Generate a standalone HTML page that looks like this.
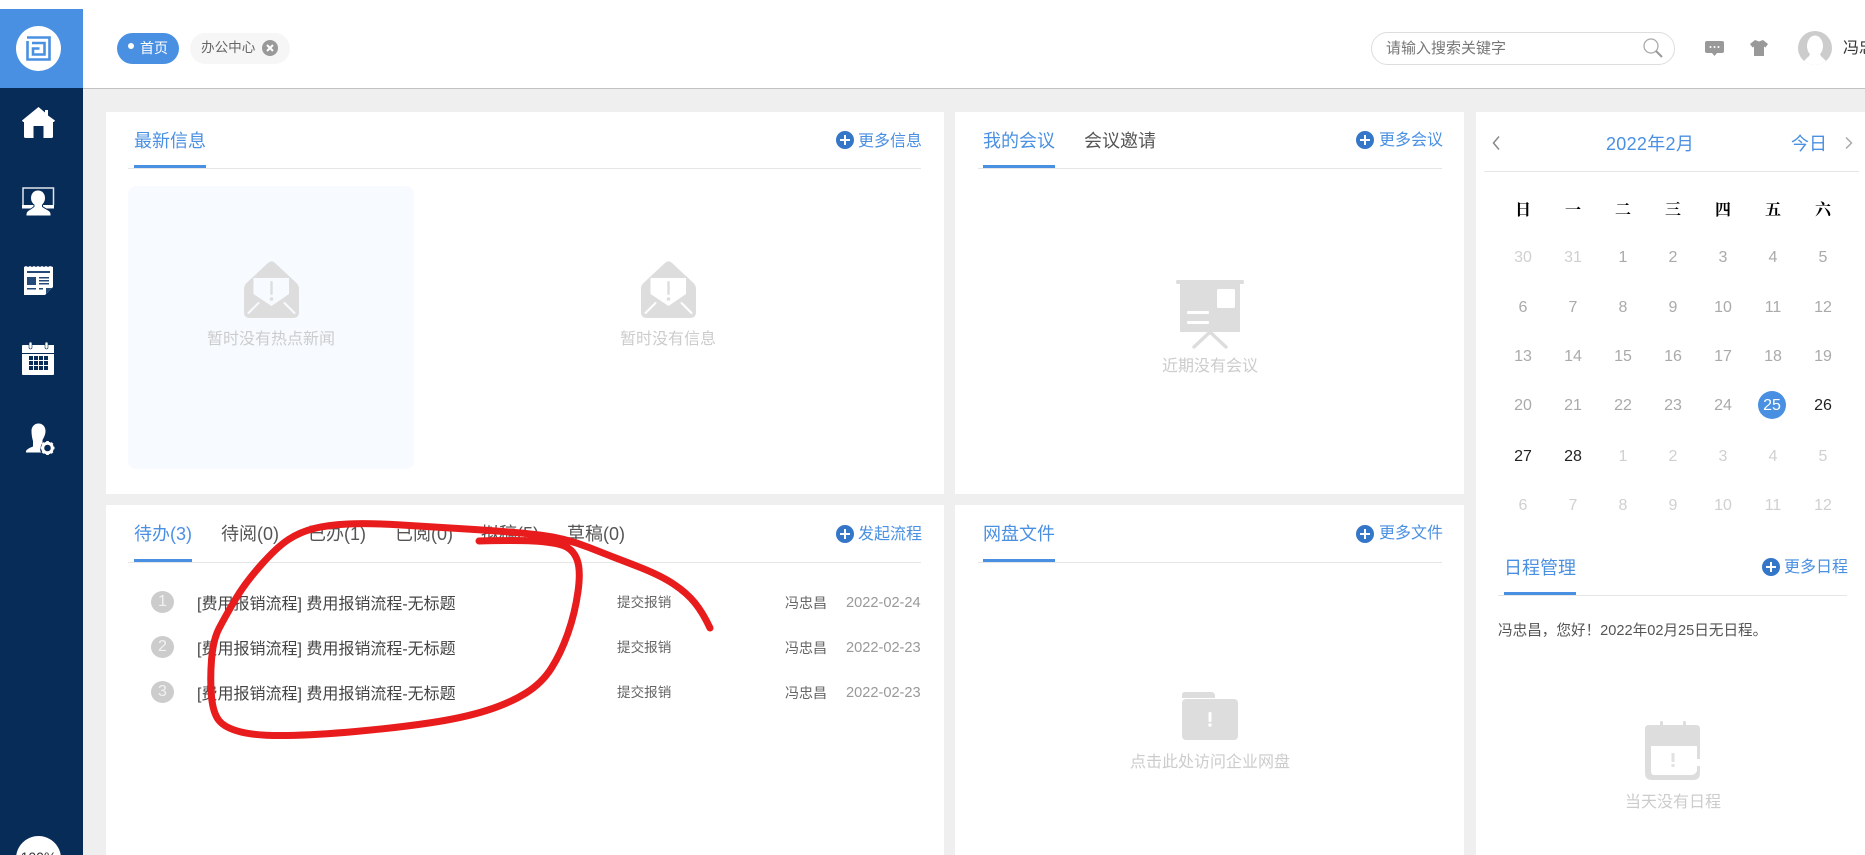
<!DOCTYPE html>
<html lang="zh-CN"><head><meta charset="utf-8"><title>办公中心</title>
<style>
html,body{margin:0;padding:0;width:1865px;height:855px;overflow:hidden;background:#efefef;font-family:"Liberation Sans","Noto Sans CJK SC",sans-serif}
body{position:relative}
#root{position:absolute;left:0;top:0;width:1865px;height:855px;overflow:hidden}
.a{position:absolute}
.t{position:absolute;white-space:nowrap;line-height:24px;height:24px}
.b{color:#4a90e2}
.e{color:#ccc;font-size:16px;text-align:center}
.h{font-size:18px}
.m{font-size:16px;color:#4a90e2}
.g{color:#555;font-size:18px}
.r{font-size:16px;color:#444}
.s{font-size:13.6px;color:#666}
.o{font-size:14px;color:#666}
.d{font-size:14.6px;color:#999}
.c{font-size:16px;text-align:center;width:50px}
.w{font-family:"Liberation Serif","Noto Serif CJK SC",serif;font-weight:700;color:#000}
.k{color:#aaa}.l{color:#d0d0d0}.n{color:#222}
.p{position:absolute;background:#fff}
.u{position:absolute;background:#4a90e2;height:3px}
.x{position:absolute;background:#e6e6e6;height:1px}
.q{position:absolute;left:151px;width:23px;height:22px;border-radius:50%;background:#ccc;color:#f2f2f2;font-size:16px;line-height:22px;text-align:center}
svg{position:absolute;overflow:visible}
</style></head><body><div id="root">

<div class="a" style="left:0;top:0;width:1865px;height:88px;background:#fff"></div>
<div class="a" style="left:83px;top:88px;width:1782px;height:1px;background:#c2c2c2"></div>
<div class="a" style="left:0;top:88px;width:83px;height:767px;background:#082c58"></div>
<div class="a" style="left:0;top:9px;width:83px;height:79px;background:#4a90e2"></div>

<!-- sidebar icons -->
<svg style="left:0;top:0" width="83" height="855" viewBox="0 0 83 855">
<circle cx="38.5" cy="48.5" r="22.5" fill="#fff"/>
<g fill="none" stroke="#4a90e2" stroke-width="2.6">
<path d="M27.5 41V59.5H49.5V37.5H27"/><path d="M32 43H44.5V54.5H33V48.5H39.5"/>
</g>
<path fill="#fff" d="M38.5 107L45 112.500V110H48V115.500L55 120.500L54 122H53V136.500Q53 138 51.500 138H43.500V126H33.500V138H25.500Q24 138 24 136.500V122H23L22 120.500Z"/>
<path fill="none" stroke="#dfe5ec" stroke-width="1.5" d="M23 205V188H53.500V205"/>
<path fill="#fff" d="M22 205H54V208.500H22Z"/>
<path fill="#fff" stroke="#082c58" stroke-width="1" d="M38 190C43 190 45.500 194 45.500 198C45.500 201 44 203.500 42.500 205V206.500C45 209 51 210 51 214V216H26V214C26 210 32 209 34 206.500V205C32 203.500 30.500 201 30.500 198C30.500 194 33 190 38 190Z"/>
<path fill="#fff" d="M24 267L26 266L28 267L30 266L32 267L34 266L36 267L38 266L40 267L42 266L44 267L46 266L48 267L50 266L53 267V287L45 295H24Z"/>
<g fill="#234a78"><rect x="27" y="271" width="23" height="2"/><rect x="27" y="277" width="9" height="8"/><rect x="39" y="277" width="10" height="1.500"/><rect x="39" y="280" width="10" height="1.500"/><rect x="39" y="283" width="10" height="1.500"/><rect x="27" y="288" width="9" height="1.500"/><rect x="39" y="288" width="4" height="1.500"/><path d="M46 294V288H52Z"/></g>
<path fill="#fff" d="M23 345H54V374Q54 375 53 375H23Q22 375 22 374V346Q22 345 23 345Z"/>
<rect x="22" y="353" width="32" height="1" fill="#082c58"/>
<rect x="29" y="342" width="3" height="7" rx="1.500" fill="#fff" stroke="#082c58" stroke-width=".6"/>
<rect x="45" y="342" width="3" height="7" rx="1.500" fill="#fff" stroke="#082c58" stroke-width=".6"/>
<g fill="#082c58"><rect x="29" y="356" width="4" height="4"/><rect x="34" y="356" width="4" height="4"/><rect x="39" y="356" width="4" height="4"/><rect x="44" y="356" width="4" height="4"/><rect x="29" y="361" width="4" height="4"/><rect x="34" y="361" width="4" height="4"/><rect x="39" y="361" width="4" height="4"/><rect x="44" y="361" width="4" height="4"/><rect x="29" y="366" width="4" height="4"/><rect x="34" y="366" width="4" height="4"/><rect x="39" y="366" width="4" height="4"/><rect x="44" y="366" width="4" height="4"/></g>
<path fill="#fff" d="M38.500 423.500C43 423.500 45.500 427 45.500 431C45.500 435 43.500 438 42.500 440V442.500C42 443 41 446 40 448C40 450 40.500 451.500 41 452.500H26C25.500 450 28 448.500 33 446.500V441C32 438 31.500 434 31.500 431C31.500 427 34 423.500 38.500 423.500Z"/>
<circle cx="47.500" cy="448" r="4.800" fill="none" stroke="#fff" stroke-width="3"/>
<g stroke="#fff" stroke-width="2.600"><path d="M47.500 441V444M47.500 452V455M40.500 448H43.500M51.500 448H54.500M42.500 443L44.700 445.200M50.300 450.800L52.500 453M52.500 443L50.300 445.200M44.700 450.800L42.500 453"/></g>
<circle cx="38.500" cy="858.500" r="22.500" fill="#fff"/>
</svg>
<div class="t" style="left:16px;width:45px;top:845px;font-size:14px;color:#333;text-align:center">100%</div>

<!-- header -->
<div class="a" style="left:117px;top:33px;width:62px;height:31px;border-radius:16px;background:#4a90e2"></div>
<div class="a" style="left:128px;top:43px;width:6px;height:6px;border-radius:50%;background:#fff"></div>
<div class="t" style="left:140px;top:36px;font-size:14px;color:#fff">首页</div>
<div class="a" style="left:190px;top:33px;width:100px;height:31px;border-radius:16px;background:#f6f6f6"></div>
<div class="t" style="left:201px;top:36px;font-size:13.6px;color:#666">办公中心</div>
<svg style="left:262px;top:40px" width="16" height="16" viewBox="0 0 16 16"><circle cx="8" cy="8" r="8" fill="#999"/><path d="M5 5L11 11M11 5L5 11" stroke="#fff" stroke-width="2"/></svg>

<div class="a" style="left:1371px;top:32px;width:302px;height:31px;border:1px solid #ddd;border-radius:17px;background:#fff"></div>
<div class="t" style="left:1386px;top:37px;font-size:15px;color:#777">请输入搜索关键字</div>
<svg style="left:1641px;top:36px" width="24" height="24" viewBox="0 0 24 24"><circle cx="10" cy="10" r="7" fill="none" stroke="#aaa" stroke-width="1.300"/><path d="M15 15L21 21" stroke="#999" stroke-width="2"/></svg>
<svg style="left:1705px;top:41px" width="19" height="15" viewBox="0 0 19 15"><path fill="#999" d="M2 0H17Q19 0 19 2V10Q19 12 17 12H12L9.500 15L7 12H2Q0 12 0 10V2Q0 0 2 0Z"/><circle cx="5.500" cy="6" r="1" fill="#fff"/><circle cx="9.500" cy="6" r="1" fill="#fff"/><circle cx="13.500" cy="6" r="1" fill="#fff"/></svg>
<svg style="left:1750px;top:40px" width="18" height="16" viewBox="0 0 18 16"><path fill="#999" d="M5 0L9 1.500L13 0L18 4L15.500 7.500L14 6.500V16H4V6.500L2.500 7.500L0 4Z"/></svg>
<svg style="left:1798px;top:31px" width="34" height="34" viewBox="0 0 34 34"><defs><clipPath id="av"><circle cx="17" cy="17" r="17"/></clipPath></defs><circle cx="17" cy="17" r="17" fill="#ccc"/><g clip-path="url(#av)" fill="#fff"><ellipse cx="17" cy="15" rx="8" ry="10.500"/><path d="M12 23C11 27 5 28 5 34H29C29 28 23 27 22 23Z"/></g></svg>
<div class="t" style="left:1843px;top:37px;font-size:16px;color:#333">冯忠昌</div>

<!-- panels -->
<div class="p" style="left:106px;top:112px;width:838px;height:382px"></div>
<div class="p" style="left:955px;top:112px;width:509px;height:382px"></div>
<div class="p" style="left:106px;top:505px;width:838px;height:350px"></div>
<div class="p" style="left:955px;top:505px;width:509px;height:350px"></div>
<div class="p" style="left:1476px;top:112px;width:389px;height:743px"></div>

<!-- 最新信息 -->
<div class="t h b" style="left:134px;top:129px">最新信息</div>
<div class="x" style="left:128px;top:168px;width:793px"></div>
<div class="u" style="left:134px;top:165px;width:72px"></div>
<svg style="left:836px;top:131px" width="18" height="18" viewBox="0 0 18 18"><circle cx="9" cy="9" r="9" fill="#3476c8"/><path d="M4 9H14M9 4V14" stroke="#fff" stroke-width="2"/></svg>
<div class="t m" style="left:858px;top:130px">更多信息</div>
<div class="a" style="left:128px;top:186px;width:286px;height:283px;border-radius:8px;background:#f7faff"></div>

<svg style="left:244px;top:261px" width="55" height="57" viewBox="0 0 55 57"><path fill="#ddd" d="M24.500 1.500Q27.500 -1 30.500 1.500L52.500 22Q55 24.500 55 28V51Q55 57 49 57H6Q0 57 0 51V28Q0 24.500 2.500 22Z"/><path fill="#f7faff" d="M9.500 17H45V33L27.500 45L9.500 33Z"/><rect x="26.300" y="20" width="2.400" height="14" rx="1.200" fill="#ddd"/><circle cx="27.500" cy="38" r="1.800" fill="#ddd"/><path d="M4.500 52L14.500 42M50.500 52L40.500 42" stroke="#f7faff" stroke-width="2" stroke-linecap="round"/></svg>
<div class="t e" style="left:171px;width:200px;top:328px">暂时没有热点新闻</div>
<svg style="left:641px;top:261px" width="55" height="57" viewBox="0 0 55 57"><path fill="#ddd" d="M24.500 1.500Q27.500 -1 30.500 1.500L52.500 22Q55 24.500 55 28V51Q55 57 49 57H6Q0 57 0 51V28Q0 24.500 2.500 22Z"/><path fill="#fff" d="M9.500 17H45V33L27.500 45L9.500 33Z"/><rect x="26.300" y="20" width="2.400" height="14" rx="1.200" fill="#ddd"/><circle cx="27.500" cy="38" r="1.800" fill="#ddd"/><path d="M4.500 52L14.500 42M50.500 52L40.500 42" stroke="#fff" stroke-width="2" stroke-linecap="round"/></svg>
<div class="t e" style="left:568px;width:200px;top:328px">暂时没有信息</div>

<!-- 会议 -->
<div class="t h b" style="left:983px;top:129px">我的会议</div>
<div class="t g" style="left:1084px;top:129px">会议邀请</div>
<div class="x" style="left:978px;top:168px;width:464px"></div>
<div class="u" style="left:983px;top:165px;width:72px"></div>
<svg style="left:1356px;top:131px" width="18" height="18" viewBox="0 0 18 18"><circle cx="9" cy="9" r="9" fill="#3476c8"/><path d="M4 9H14M9 4V14" stroke="#fff" stroke-width="2"/></svg>
<div class="t m" style="left:1379px;top:129px">更多会议</div>
<svg style="left:1176px;top:280px" width="68" height="68" viewBox="0 0 68 68"><rect width="68" height="4" rx="1.500" fill="#ddd"/><rect x="4" y="3" width="60" height="49" fill="#ddd"/><rect x="41" y="9" width="18" height="19" rx="1.500" fill="#fff"/><rect x="11" y="31" width="22" height="3" rx="1" fill="#fff"/><rect x="11" y="41" width="22" height="3" rx="1" fill="#fff"/><path d="M34 52L18 67M34 52L50 67" stroke="#ddd" stroke-width="3.400" stroke-linecap="round"/></svg>
<div class="t e" style="left:1110px;width:200px;top:355px">近期没有会议</div>

<!-- 待办 -->
<div class="t h b" style="left:134px;top:522px">待办(3)</div>
<div class="t g" style="left:221px;top:522px">待阅(0)</div>
<div class="t g" style="left:308px;top:522px">已办(1)</div>
<div class="t g" style="left:395px;top:522px">已阅(0)</div>
<div class="t g" style="left:481px;top:522px">拟稿(5)</div>
<div class="t g" style="left:567px;top:522px">草稿(0)</div>
<div class="x" style="left:128px;top:562px;width:793px"></div>
<div class="u" style="left:134px;top:559px;width:58px"></div>
<svg style="left:836px;top:525px" width="18" height="18" viewBox="0 0 18 18"><circle cx="9" cy="9" r="9" fill="#3476c8"/><path d="M4 9H14M9 4V14" stroke="#fff" stroke-width="2"/></svg>
<div class="t m" style="left:858px;top:523px">发起流程</div>

<div class="q" style="top:591px">1</div>
<div class="t r" style="left:197px;top:593px">[费用报销流程] 费用报销流程-无标题</div>
<div class="t s" style="left:617px;top:591px">提交报销</div>
<div class="t o" style="left:785px;top:591px">冯忠昌</div>
<div class="t d" style="left:846px;top:591px">2022-02-24</div>

<div class="q" style="top:636px">2</div>
<div class="t r" style="left:197px;top:638px">[费用报销流程] 费用报销流程-无标题</div>
<div class="t s" style="left:617px;top:636px">提交报销</div>
<div class="t o" style="left:785px;top:636px">冯忠昌</div>
<div class="t d" style="left:846px;top:636px">2022-02-23</div>

<div class="q" style="top:681px">3</div>
<div class="t r" style="left:197px;top:683px">[费用报销流程] 费用报销流程-无标题</div>
<div class="t s" style="left:617px;top:681px">提交报销</div>
<div class="t o" style="left:785px;top:681px">冯忠昌</div>
<div class="t d" style="left:846px;top:681px">2022-02-23</div>

<!-- 网盘 -->
<div class="t h b" style="left:983px;top:522px">网盘文件</div>
<div class="x" style="left:978px;top:562px;width:464px"></div>
<div class="u" style="left:983px;top:559px;width:72px"></div>
<svg style="left:1356px;top:525px" width="18" height="18" viewBox="0 0 18 18"><circle cx="9" cy="9" r="9" fill="#3476c8"/><path d="M4 9H14M9 4V14" stroke="#fff" stroke-width="2"/></svg>
<div class="t m" style="left:1379px;top:522px">更多文件</div>
<svg style="left:1182px;top:692px" width="56" height="48" viewBox="0 0 56 48"><path fill="#ddd" d="M3 0H29Q33 0 33 4V6H0V3Q0 0 3 0Z"/><rect y="7" width="56" height="41" rx="4" fill="#ddd"/><rect x="26.500" y="20" width="3" height="10" rx="1" fill="#fff"/><circle cx="28" cy="33" r="1.700" fill="#fff"/></svg>
<div class="t e" style="left:1110px;width:200px;top:751px">点击此处访问企业网盘</div>

<!-- 日历 -->
<svg style="left:1491px;top:135px" width="12" height="16" viewBox="0 0 12 16"><path d="M8 1.500L2.500 8L8 14.500" fill="none" stroke="#888" stroke-width="1.500"/></svg>
<div class="t h b" style="left:1606px;top:132px;letter-spacing:.3px">2022年2月</div>
<div class="t h b" style="left:1791px;top:132px">今日</div>
<svg style="left:1843px;top:136px" width="12" height="14" viewBox="0 0 12 14"><path d="M3 1.500L8.500 7L3 12.500" fill="none" stroke="#aaa" stroke-width="1.500"/></svg>
<div class="x" style="left:1484px;top:171px;width:375px"></div>

<div class="t c w" style="left:1498px;top:199px">日</div><div class="t c w" style="left:1548px;top:199px">一</div><div class="t c w" style="left:1598px;top:199px">二</div><div class="t c w" style="left:1648px;top:199px">三</div><div class="t c w" style="left:1698px;top:199px">四</div><div class="t c w" style="left:1748px;top:199px">五</div><div class="t c w" style="left:1798px;top:199px">六</div>

<div class="t c l" style="left:1498px;top:246px">30</div><div class="t c l" style="left:1548px;top:246px">31</div><div class="t c k" style="left:1598px;top:246px">1</div><div class="t c k" style="left:1648px;top:246px">2</div><div class="t c k" style="left:1698px;top:246px">3</div><div class="t c k" style="left:1748px;top:246px">4</div><div class="t c k" style="left:1798px;top:246px">5</div>

<div class="t c k" style="left:1498px;top:296px">6</div><div class="t c k" style="left:1548px;top:296px">7</div><div class="t c k" style="left:1598px;top:296px">8</div><div class="t c k" style="left:1648px;top:296px">9</div><div class="t c k" style="left:1698px;top:296px">10</div><div class="t c k" style="left:1748px;top:296px">11</div><div class="t c k" style="left:1798px;top:296px">12</div>

<div class="t c k" style="left:1498px;top:345px">13</div><div class="t c k" style="left:1548px;top:345px">14</div><div class="t c k" style="left:1598px;top:345px">15</div><div class="t c k" style="left:1648px;top:345px">16</div><div class="t c k" style="left:1698px;top:345px">17</div><div class="t c k" style="left:1748px;top:345px">18</div><div class="t c k" style="left:1798px;top:345px">19</div>

<div class="a" style="left:1758px;top:391px;width:28px;height:28px;border-radius:50%;background:#4a90e2"></div>
<div class="t c k" style="left:1498px;top:394px">20</div><div class="t c k" style="left:1548px;top:394px">21</div><div class="t c k" style="left:1598px;top:394px">22</div><div class="t c k" style="left:1648px;top:394px">23</div><div class="t c k" style="left:1698px;top:394px">24</div><div class="t c" style="left:1747px;top:394px;color:#fff">25</div><div class="t c n" style="left:1798px;top:394px">26</div>

<div class="t c n" style="left:1498px;top:445px">27</div><div class="t c n" style="left:1548px;top:445px">28</div><div class="t c l" style="left:1598px;top:445px">1</div><div class="t c l" style="left:1648px;top:445px">2</div><div class="t c l" style="left:1698px;top:445px">3</div><div class="t c l" style="left:1748px;top:445px">4</div><div class="t c l" style="left:1798px;top:445px">5</div>

<div class="t c l" style="left:1498px;top:494px">6</div><div class="t c l" style="left:1548px;top:494px">7</div><div class="t c l" style="left:1598px;top:494px">8</div><div class="t c l" style="left:1648px;top:494px">9</div><div class="t c l" style="left:1698px;top:494px">10</div><div class="t c l" style="left:1748px;top:494px">11</div><div class="t c l" style="left:1798px;top:494px">12</div>

<!-- 日程 -->
<div class="t h b" style="left:1504px;top:556px">日程管理</div>
<div class="x" style="left:1498px;top:595px;width:349px"></div>
<div class="u" style="left:1504px;top:592px;width:72px"></div>
<svg style="left:1762px;top:558px" width="18" height="18" viewBox="0 0 18 18"><circle cx="9" cy="9" r="9" fill="#3476c8"/><path d="M4 9H14M9 4V14" stroke="#fff" stroke-width="2"/></svg>
<div class="t m" style="left:1784px;top:556px">更多日程</div>
<div class="t" style="left:1498px;top:619px;font-size:14.6px;color:#555">冯忠昌，您好！2022年02月25日无日程。</div>
<svg style="left:1645px;top:721px" width="55" height="59" viewBox="0 0 55 59"><path fill="#ddd" d="M4 4H15V1.500Q15 0 16.500 0Q18 0 18 1.500V4H38V1.500Q38 0 39.500 0Q41 0 41 1.500V4H51Q55 4 55 8V38H52V25H6V50Q6 54 9 54H46Q50 54 52 50V45H55V52Q55 59 48 59H7Q0 59 0 52V8Q0 4 4 4Z"/><rect x="26.500" y="32" width="3" height="9" fill="#e2e2e2"/><rect x="26.500" y="43" width="3" height="3" fill="#e2e2e2"/></svg>
<div class="t e" style="left:1573px;width:200px;top:791px">当天没有日程</div>

<!-- red annotation -->
<svg style="left:0;top:0" width="1865" height="855" viewBox="0 0 1865 855">
<path fill="none" stroke="#e81c1c" stroke-width="7" stroke-linecap="round" stroke-linejoin="round" d="M479 541Q514 540 533.500 541Q553 542 563 545.500Q573 549 577 559.500Q581 570 578 591.500Q575 613 568 633Q561 653 551.500 668Q542 683 526 693Q510 703 486.500 710.500Q463 718 429 723Q395 728 355.500 731.500Q316 735 286.500 735.500Q257 736 241 732Q225 728 219 720.500Q213 713 211.500 696.500Q210 680 211.500 660Q213 640 219 628.500Q225 617 235 600Q245 583 261 565Q277 547 288.500 539.500Q300 532 314 528.500Q328 525 348 524Q368 523 401.500 525Q435 527 474.500 529.500Q514 532 539.500 535Q565 538 589 547.500Q613 557 636.500 566Q660 575 673.500 584Q687 593 695 603Q703 613 710 628"/>
</svg>
</div></body></html>
